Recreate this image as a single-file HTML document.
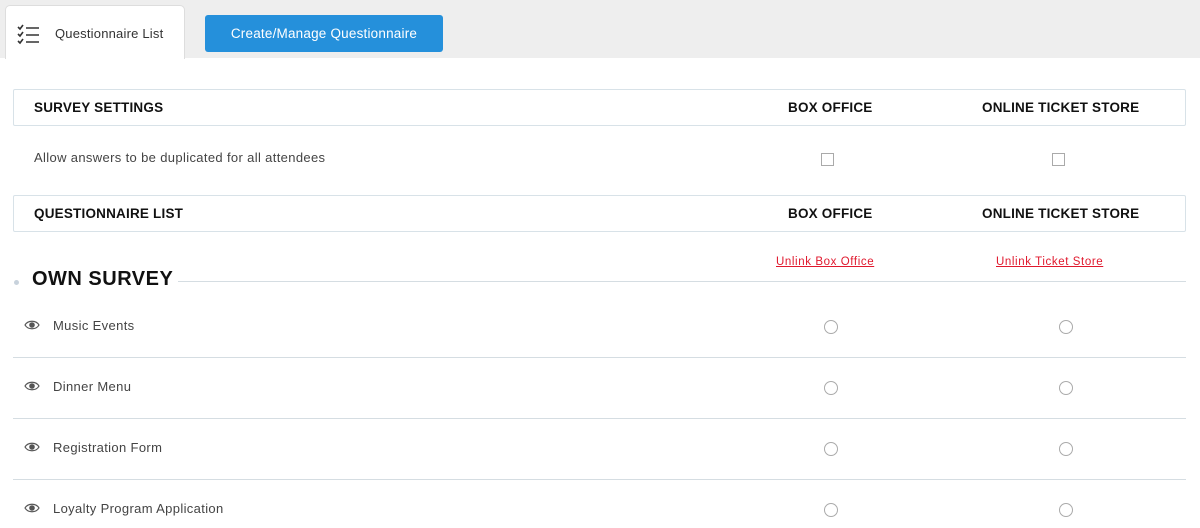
<!DOCTYPE html>
<html><head><style>
*{margin:0;padding:0;box-sizing:border-box}
body{width:1200px;height:528px;overflow:hidden;background:#fff;font-family:"Liberation Sans",sans-serif;position:relative;color:#444}
.top{position:absolute;left:0;top:0;width:1200px;height:58px;background:#eeeeee}
.tab{position:absolute;left:5px;top:5px;width:180px;height:54px;background:#fff;border:1px solid #ddd;border-bottom:none;border-radius:5px 5px 0 0}
.tab span{position:absolute;left:49px;top:20px;font-size:13px;color:#333;letter-spacing:.2px}
.btn{position:absolute;left:205px;top:15px;width:238px;height:37px;background:#2590db;border-radius:3px;color:#fff;font-size:13.5px;text-align:center;line-height:37px;letter-spacing:.2px}
.hbox{position:absolute;left:13px;width:1173px;height:37px;border:1px solid #d8e2e8;border-radius:2px}
.hbox b{position:absolute;top:10px;font-size:13.5px;color:#111;letter-spacing:.2px}
.a{position:absolute;font-size:13px;color:#444;letter-spacing:.35px}
.cb{position:absolute;width:13px;height:13px;border:1px solid #aaa}
.rd{position:absolute;width:14px;height:14px;border:1px solid #aaa;border-radius:50%}
.ln{position:absolute;height:1px;background:#d5dde2}
.lk{position:absolute;font-size:11.5px;color:#e0182d;text-decoration:underline;letter-spacing:.6px}
.eye{position:absolute;left:24px}
</style></head><body>
<div class="top"></div>
<div class="tab">
<svg style="position:absolute;left:11px;top:18px" width="24" height="22" viewBox="0 0 24 22" fill="none" stroke="#333" stroke-width="1.6"><path d="M1 3l2 2 3-4M1 10l2 2 3-4M1 17l2 2 3-4"/><path d="M9 4h13M9 11h13M9 18h13"/></svg>
<span>Questionnaire List</span></div>
<div class="btn">Create/Manage Questionnaire</div>

<div class="hbox" style="top:89px"><b style="left:20px">SURVEY SETTINGS</b><b style="left:774px">BOX OFFICE</b><b style="left:968px">ONLINE TICKET STORE</b></div>
<div class="a" style="left:34px;top:150px">Allow answers to be duplicated for all attendees</div>
<div class="cb" style="left:821px;top:153px"></div>
<div class="cb" style="left:1052px;top:153px"></div>
<div class="hbox" style="top:195px"><b style="left:20px">QUESTIONNAIRE LIST</b><b style="left:774px">BOX OFFICE</b><b style="left:968px">ONLINE TICKET STORE</b></div>
<div class="lk" style="left:776px;top:256px">Unlink Box Office</div>
<div class="lk" style="left:996px;top:256px">Unlink Ticket Store</div>
<div style="position:absolute;left:14px;top:280px;width:5px;height:5px;border-radius:50%;background:#c8d2dc"></div>
<div style="position:absolute;left:32px;top:268px;font-size:20px;font-weight:bold;color:#111;letter-spacing:.5px">OWN SURVEY</div>
<div class="ln" style="left:178px;width:1008px;top:281px"></div>

<div class="a" style="left:53px;top:318px">Music Events</div>
<div class="a" style="left:53px;top:379px">Dinner Menu</div>
<div class="a" style="left:53px;top:440px">Registration Form</div>
<div class="a" style="left:53px;top:501px">Loyalty Program Application</div>
<svg class="eye" style="top:320px" width="16" height="10" viewBox="0 0 16 10" fill="none" stroke="#555" stroke-width="1.2"><path d="M1 5C4 0 12 0 15 5C12 10 4 10 1 5Z"/><circle cx="8" cy="5" r="2.2" fill="#555"/></svg>
<svg class="eye" style="top:381px" width="16" height="10" viewBox="0 0 16 10" fill="none" stroke="#555" stroke-width="1.2"><path d="M1 5C4 0 12 0 15 5C12 10 4 10 1 5Z"/><circle cx="8" cy="5" r="2.2" fill="#555"/></svg>
<svg class="eye" style="top:442px" width="16" height="10" viewBox="0 0 16 10" fill="none" stroke="#555" stroke-width="1.2"><path d="M1 5C4 0 12 0 15 5C12 10 4 10 1 5Z"/><circle cx="8" cy="5" r="2.2" fill="#555"/></svg>
<svg class="eye" style="top:503px" width="16" height="10" viewBox="0 0 16 10" fill="none" stroke="#555" stroke-width="1.2"><path d="M1 5C4 0 12 0 15 5C12 10 4 10 1 5Z"/><circle cx="8" cy="5" r="2.2" fill="#555"/></svg>

<div class="rd" style="left:824px;top:320px"></div><div class="rd" style="left:1059px;top:320px"></div>
<div class="rd" style="left:824px;top:381px"></div><div class="rd" style="left:1059px;top:381px"></div>
<div class="rd" style="left:824px;top:442px"></div><div class="rd" style="left:1059px;top:442px"></div>
<div class="rd" style="left:824px;top:503px"></div><div class="rd" style="left:1059px;top:503px"></div>
<div class="ln" style="left:13px;width:1173px;top:357px"></div>
<div class="ln" style="left:13px;width:1173px;top:418px"></div>
<div class="ln" style="left:13px;width:1173px;top:479px"></div>
</body></html>
